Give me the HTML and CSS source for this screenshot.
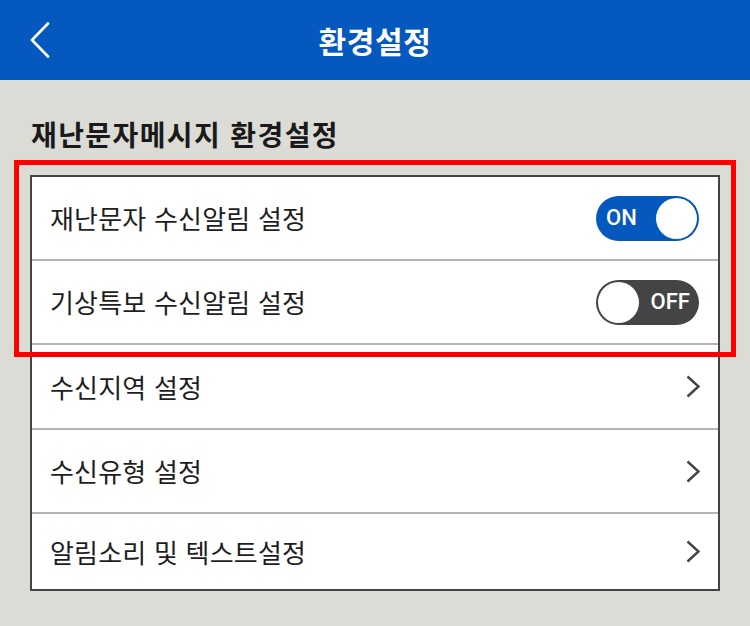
FILE: index.html
```html
<!DOCTYPE html>
<html lang="ko">
<head>
<meta charset="utf-8">
<title>환경설정</title>
<link rel="stylesheet" href="styles.css">
</head>
<body>
<header class="topbar">
  <button class="back" aria-label="뒤로">
    <svg width="20" height="36" viewBox="0 0 20 36"><polyline points="18,1.5 2,18 18,34.5" fill="none" stroke="#fff" stroke-width="2.6" stroke-linecap="round" stroke-linejoin="round"/></svg>
  </button>
  <h1 class="topbar-title">환경설정</h1>
</header>
<main class="content">
  <h2 class="section-title">재난문자메시지 환경설정</h2>
  <div class="list-wrap">
    <ul class="list">
      <li class="row"><span class="label">재난문자 수신알림 설정</span>
        <span class="toggle on"><span class="toggle-text">ON</span><span class="knob"></span></span></li>
      <li class="row"><span class="label">기상특보 수신알림 설정</span>
        <span class="toggle off"><span class="knob"></span><span class="toggle-text">OFF</span></span></li>
      <li class="row tall"><span class="label">수신지역 설정</span>
        <svg class="chev" width="14" height="23" viewBox="0 0 14 23"><polyline points="1.5,1.5 12.5,11.5 1.5,21.5" fill="none" stroke="#444" stroke-width="2.4"/></svg></li>
      <li class="row"><span class="label">수신유형 설정</span>
        <svg class="chev" width="14" height="23" viewBox="0 0 14 23"><polyline points="1.5,1.5 12.5,11.5 1.5,21.5" fill="none" stroke="#444" stroke-width="2.4"/></svg></li>
      <li class="row last"><span class="label">알림소리 및 텍스트설정</span>
        <svg class="chev" width="14" height="23" viewBox="0 0 14 23"><polyline points="1.5,1.5 12.5,11.5 1.5,21.5" fill="none" stroke="#444" stroke-width="2.4"/></svg></li>
    </ul>
    <div class="highlight"></div>
  </div>
</main>
</body>
</html>
```
FILE: styles.css
```css
* { box-sizing: border-box; }
html, body { margin: 0; padding: 0; }
body {
  width: 750px;
  height: 626px;
  overflow: hidden;
  background: #dcdcd6;
  font-family: "Noto Sans CJK KR", "Noto Sans", sans-serif;
  color: #1e1e1e;
}
.topbar {
  height: 80px;
  background: #0558be;
  display: flex;
  align-items: center;
  justify-content: center;
  position: relative;
}
.back {
  position: absolute;
  left: 30px;
  top: 22px;
  width: 20px;
  height: 36px;
  padding: 0;
  border: 0;
  background: none;
  display: block;
}
.back svg { display: block; }
.topbar-title {
  margin: 0;
  color: #fff;
  font-size: 30px;
  font-weight: 700;
  line-height: 1;
  letter-spacing: 0.6px;
}
.content { padding: 0 30px; }
.section-title {
  margin: 0;
  padding: 36px 0 0 1px;
  height: 95px;
  font-size: 28px;
  font-weight: 700;
  line-height: 36px;
  color: #1a1a1a;
  letter-spacing: 1.4px;
}
.list-wrap { position: relative; }
.list {
  list-style: none;
  margin: 0;
  padding: 0;
  background: #fff;
  border: 2px solid #444;
  width: 690px;
}
.row {
  height: 84px;
  border-bottom: 2px solid #b4b4b4;
  display: flex;
  align-items: center;
  justify-content: space-between;
  padding: 0 18px 0 18px;
}
.row.tall { height: 85px; }
.row.last { height: 75px; border-bottom: 0; }
.label {
  font-size: 26px;
  line-height: 1;
  color: #1e1e1e;
  letter-spacing: 0.2px;
}
.chev { display: block; margin-right: 0; }
.toggle {
  width: 103px;
  height: 45px;
  border-radius: 23px;
  display: flex;
  align-items: center;
  padding: 0 2px;
  margin-right: 1px;
}
.toggle.on { background: #0558be; justify-content: space-between; padding-left: 10px; }
.toggle.off { background: #444; justify-content: space-between; padding-right: 9px; }
.knob {
  width: 41px;
  height: 41px;
  border-radius: 50%;
  background: #fff;
}
.toggle-text {
  color: #fff;
  font-family: Roboto, "Noto Sans", sans-serif;
  font-size: 22px;
  font-weight: 500;
  line-height: 1;
}
.highlight {
  position: absolute;
  left: -16px;
  top: -15px;
  width: 722px;
  height: 197px;
  border: 5px solid #ff0000;
  pointer-events: none;
}
```
